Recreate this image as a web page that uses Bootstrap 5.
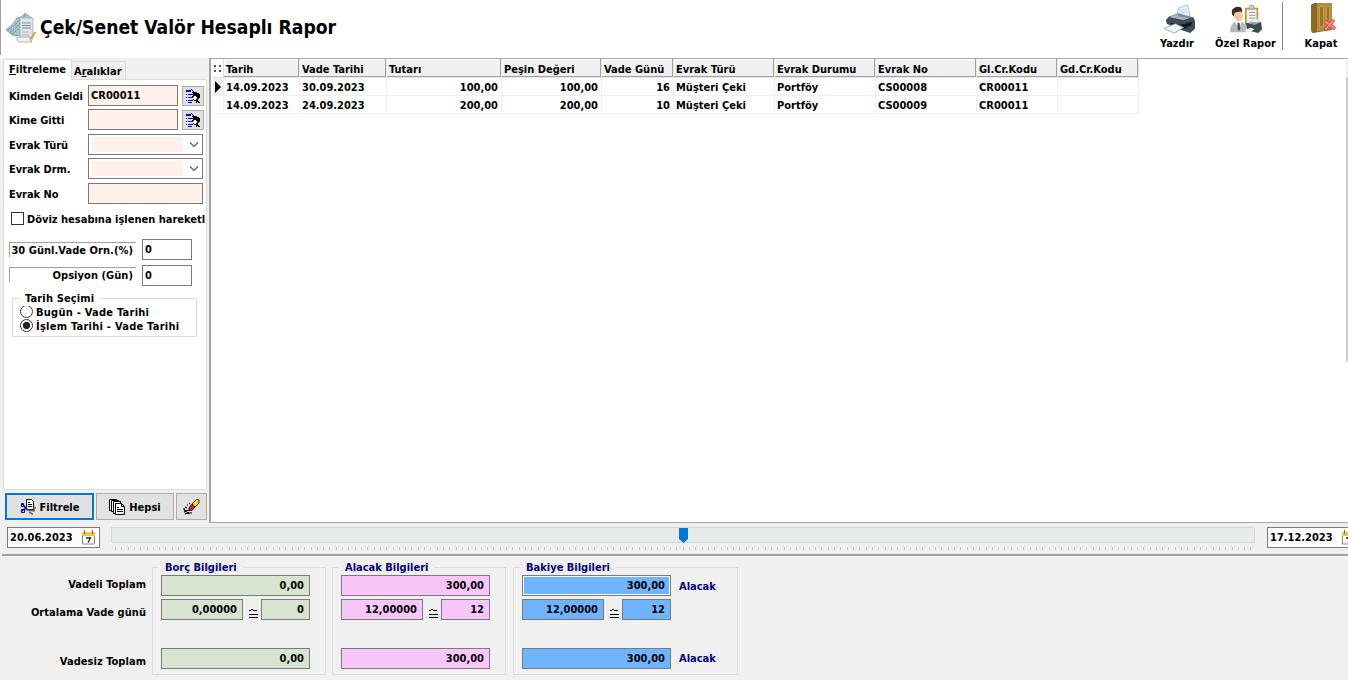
<!DOCTYPE html>
<html lang="tr">
<head>
<meta charset="utf-8">
<meta name="viewport" content="width=device-width, initial-scale=1">
<title>Çek/Senet Valör Hesaplı Rapor</title>
<link href="https://cdn.jsdelivr.net/npm/bootstrap@5.3.0/dist/css/bootstrap.min.css" rel="stylesheet">
<style>
body{width:1348px;height:680px;background:#f0f0f0;color:#000;font:bold 11px/14px "DejaVu Sans Condensed","DejaVu Sans",sans-serif;font-stretch:condensed;white-space:nowrap}
svg{display:block;flex:none}
.topbar{height:58px;background:linear-gradient(#a0a0a0,#a0a0a0) 0 0/1px 55px no-repeat #fff}
.topbar h1{font-size:19.150px;line-height:24px;font-weight:bold;margin:1px 0 0 4px}
.tool{padding-top:3px}
.tool svg{margin-bottom:2px}
.sep{width:1px;height:48px;background:#888;margin-top:2px}
.workarea{height:465px}
.side{width:211px;border-right:2px solid #a5a5aa;padding:1px 0 0 3px}
.tabs{height:20px}
.tab1{width:69px;height:21px;background:#fff;border:1px solid #dcdcdc;border-bottom:0;padding:3px 0 0 5px;z-index:1}
.tab2{width:54px;height:18px;border:1px solid #dcdcdc;border-left:0;border-bottom:0;margin-top:2px;padding:3px 0 0 2px}
.page{width:204px;height:411px;background:#fff;border:1px solid #dcdcdc;padding:5px 0 0 5px}
.frow{height:21px}
.flabel{width:79px;padding-top:5px;letter-spacing:-.05px}
.fld{height:21px;border:1px solid #7a7a7a;background:#fff;padding:3px 2px 2px}
.fld.peach{background:#fff0ea}
.combo{width:115px;padding:2px 3px 2px 2px}
.combo i{display:block;width:92px;height:15px;background:#fff0ea}
.mini{width:22px;height:20px;background:#e1e1e1;border:1px solid #adadad;margin:1px 0 0 4px;padding:1px 2px}
.chk{width:13px;height:13px;border:1px solid #333;margin:0 3px 0 2px;flex:none}
.bevel{width:127px;height:15px;border-top:1px solid #a0a0a0;border-left:1px solid #a0a0a0;text-align:right;padding-right:3px;line-height:15px;letter-spacing:.05px}
.gbox{border:1px solid #dcdcdc;position:relative}
.gbox>.cap{position:absolute;top:-8px;line-height:15px;padding:0 6px}
.radio{width:13px;height:13px;border:1px solid #333;border-radius:50%;background:#fff;margin-right:3px;flex:none}
.radio.on{background:radial-gradient(circle,#222 0 3.2px,#fff 4px)}
.opts{letter-spacing:.25px;height:14px;line-height:15px}
.btns{height:32px;padding:3px 0 0 2px;gap:2px}
.wbtn{height:27px;background:#e1e1e1;border:1px solid #adadad}
.wbtn.def{border:2px solid #0078d7}
.wbtn span{padding-top:2px;margin-left:1px}
.gridarea{background:#fff;border-top:1px solid #a5a5aa;border-bottom:1px solid #a5a5aa;padding:0 0 0 2px}
.dgrid{table-layout:fixed;width:926px;border-collapse:separate;border-spacing:0}
.dgrid th,.dgrid td{height:18px;padding:1px 3px 0 2px;line-height:15px;border-right:1px solid #f0f0f0;border-bottom:1px solid #f0f0f0;overflow:hidden}
.dgrid th{height:19px;background:#f0f0f0;border-color:#e8e8e8;box-shadow:inset -1px -1px #a0a0a0,inset 1px 1px #fff;padding-top:2px}
.dgrid th:first-child{background:#fff;border-color:#e0e0e0;box-shadow:none;padding:0 0 0 1px}
.dgrid td:first-child{padding:0 0 0 1px}
.sbar{width:2px;background:#cdcdcd;border-top:19px solid #f0f0f0;margin-bottom:160px}
.slide{height:33px;border-bottom:2px solid #a0a0a0;margin-left:2px;padding:4px 0 0 5px;overflow:hidden}
.date{width:93px;flex:none;padding:2px 3px 2px 2px}
.track{width:1144px;height:16px;background:#e7eaea;border:1px solid #d6d6d6}
.thumb{position:absolute;left:568px;top:1px}
.totals{height:124px;border-top:1px solid #fff;margin-left:2px;padding-top:10px}
.rowlabels{width:144px;text-align:right;letter-spacing:.04px}
.navy{color:#000080}
.sum{width:174px;height:108px;padding:7px 0 0 8px}
.sum .fld{text-align:right;padding-right:5px}
.sum .w1{width:149px}.sum .w2{width:82px}.sum .w3{width:49px}
.eq{margin-left:2px}
.green .fld{background:#d6e4d0}.pink .fld{background:#f9c6f9}.blue .fld{background:#6eb4ff}
.blue .fld.focus{box-shadow:inset 0 0 0 1px #fff}
</style>
</head>
<body class="overflow-hidden">
<svg width="0" height="0" class="position-absolute">
 <defs>
  <g id="pick" shape-rendering="crispEdges"><path fill="#00f" d="M1 2h5v2H1zM1 6h1v1H1zM3 6h5v1H3zM1 9h1v1H1zM3 9h4v1H3zM1 12h1v1H1zM3 12h5v1H3zM3 14h4v1H3z"/><path fill="#000" d="M6 1h1v1h1v1h1v1h3v1h2v1h1v4h-1v1h-1v2h1v1h1v1h-2v-1h-1v1h-1v-2h-2v-1H8v-2H7V8h1V5H7V4h1V3H7V2H6z"/><path fill="#fff" d="M9 8h2v1h1v2h-1v1H9v-1H8V9h1z"/></g>
  <g id="cal"><path fill="#fff" stroke="#888" d="M1.500 4.500h12v9.500h-12z"/><path fill="#f5c63c" d="M1 2h13v4H1z"/><path stroke="#666" d="M3.500 0v4M11.500 0v4"/><path d="M5 8h4.500L7 12.500" stroke="#222" stroke-width="1.300" fill="none"/></g>
  <path id="chev" d="M1 1.500l4 4 4-4" fill="none" stroke="#555" stroke-width="1.100"/>
  <path id="cong" d="M1 11.500h2M3 10.500h2M4.500 11.500h3M8.500 11v1M1 15.500h9M1 18.500h9" stroke="#000" fill="none" shape-rendering="crispEdges"/>
 </defs>
</svg>

<header class="topbar d-flex justify-content-between">
 <div class="d-flex align-items-center" style="height:55px;padding-left:5px">
  <svg width="31" height="32" viewBox="0 0 31 32"><path fill="#a9c6cc" stroke="#6f989f" stroke-width=".8" d="M1 18Q8 13 12 6q5 0 8-5l8 6-12 16-7 1z"/><path stroke="#55858c" fill="none" d="M3 18q8-5 11-10 4-1 6-5M5 20q6-3 10-9M7 22q5-3 8-7" stroke-dasharray="2 1"/><path fill="#dfe3e6" stroke="#a8afb5" stroke-width=".8" d="M15 6h13v20l-2 3H14l1-4z"/><path stroke="#8a9199" stroke-width="1.200" d="M17 11h9M17 13.500h9M17 16h9"/><path stroke="#b4bac0" d="M17 20h7M17 23h7"/><path fill="#f2f3f3" stroke="#a5a5a5" stroke-width=".8" d="M12 25h13q-1 3 2 5H14q-3-1-2-5z"/><path stroke="#e39b21" stroke-width="1.600" d="M30.500 20l-5 7"/></svg>
  <h1>Çek/Senet Valör Hesaplı Rapor</h1>
 </div>
 <div class="d-flex" style="margin-right:-11px">
  <div class="tool d-flex flex-column align-items-center" style="width:76px"><svg width="32" height="32" viewBox="0 0 34 32" style="margin-left:3px"><path fill="#e7f3fa" stroke="#9eb4c2" stroke-width=".8" d="M14 13L17 4 26 1l3 12z"/><path stroke="#b9d1de" d="M18 7l7-2M18 10l8-2"/><path fill="#7d8a95" d="M5 14l11-4 15 4 2 5-14 3z"/><path fill="#3d4c58" d="M3 17l4-4 14 4 11-3 2 4v8l-5 5-12-4-13-6z"/><path fill="#a9b6bf" d="M6 14l10-3v2l12 2-6 2z"/><path fill="#15191c" d="M8 20l11 2 12-3-1 4-9 4-10-3z"/><path fill="#eef7fb" stroke="#8499a6" stroke-width=".8" d="M1 26l12-5 9 4-10 6z"/></svg><span>Yazdır</span></div>
  <div class="tool d-flex flex-column align-items-center" style="width:61px"><svg width="32" height="32" viewBox="0 0 34 32"><path fill="#e9a52e" stroke="#b98732" d="M16.500 4.500h13v17h-13z"/><path fill="#f7fafb" d="M18 6h10v14H18z"/><path fill="#c8cdd0" stroke="#888" stroke-width=".7" d="M21 1.500h4l1 4h-6z"/><path stroke="#8799aa" d="M20 9h7M20 12h7M20 15h7"/><path fill="#f8c59c" d="M4 7l8-1 2 7-2 5H7l-3-5z"/><path fill="#3a2b25" d="M2 11V7q2-4 7-4 4 0 4 5l-1 1V8L5 9l-1 4z"/><path fill="#b5b9bd" d="M0 30q0-9 6-11l5-1 6 4v8z"/><path fill="#fff" d="M5 18l5 10 2-10z"/><path fill="#444" d="M8 20h2l1 6-1.500 3L8 26z"/><path fill="#e4f0f6" stroke="#9eb4c2" stroke-width=".6" d="M21 19l4-4 5 1v5z"/><path fill="#3b4852" d="M17 20l9 2 7-3 1 8-4 4-12-3z"/><path fill="#93a2ad" d="M19 20l6-1 6 1-5 2z"/><path fill="#e8f0f4" d="M15 28l7-3 4 2-6 4z"/></svg><span>Özel Rapor</span></div>
  <div class="sep" style="margin-left:6px"></div>
  <div class="tool d-flex flex-column align-items-center" style="width:76px"><svg width="31" height="32" viewBox="0 0 31 32" style="margin-left:1px"><path fill="#8b6a24" d="M5 2l3-2h18v27l-20 3-1-3z"/><path fill="#b58d3c" d="M9 0h17v26L9 29z"/><path fill="#8d6722" d="M8 0h3v29l-3 1z"/><path fill="#9a7229" stroke="#c39e4c" d="M13.500 3.500h4v20h-4zM20.500 3.500h3v18h-3z"/><path stroke="#d94752" stroke-width="3.500" stroke-linecap="round" d="M20 19l8 6M27 18l-7 8"/><path stroke="#ff8d95" stroke-width="1.800" stroke-linecap="round" d="M20 19l8 6M27 18l-7 8"/></svg><span>Kapat</span></div>
 </div>
</header>

<main class="workarea d-flex">
 <aside class="side flex-shrink-0">
  <div class="tabs d-flex"><div class="tab1 position-relative"><u>F</u>iltreleme</div><div class="tab2">A<u>r</u>alıklar</div></div>
  <div class="page">
   <div class="frow d-flex"><div class="flabel">Kimden Geldi</div><div class="fld peach" style="width:90px">CR00011</div><div class="mini"><svg width="16" height="16" viewBox="0 0 16 16"><use href="#pick"/></svg></div></div>
   <div class="frow d-flex" style="margin-top:3px"><div class="flabel">Kime Gitti</div><div class="fld peach" style="width:90px"></div><div class="mini"><svg width="16" height="16" viewBox="0 0 16 16"><use href="#pick"/></svg></div></div>
   <div class="frow d-flex" style="margin-top:4px"><div class="flabel">Evrak Türü</div><div class="fld combo d-flex justify-content-between align-items-center"><i></i><svg width="10" height="7"><use href="#chev"/></svg></div></div>
   <div class="frow d-flex" style="margin-top:3px"><div class="flabel">Evrak Drm.</div><div class="fld combo d-flex justify-content-between align-items-center"><i></i><svg width="10" height="7"><use href="#chev"/></svg></div></div>
   <div class="frow d-flex" style="margin-top:4px"><div class="flabel">Evrak No</div><div class="fld peach" style="width:115px"></div></div>
   <div class="d-flex overflow-hidden" style="margin:8px 1px 0 0;height:15px;line-height:15px"><div class="chk"></div><span>Döviz hesabına işlenen hareketl</span></div>
   <div class="frow d-flex" style="margin-top:12px"><div class="bevel" style="margin:3px 6px 0 0">30 Günl.Vade Orn.(%)</div><div class="fld" style="width:50px">0</div></div>
   <div class="frow d-flex" style="margin-top:5px"><div class="bevel" style="margin:2px 6px 0 0">Opsiyon (Gün)</div><div class="fld" style="width:50px">0</div></div>
   <div class="gbox" style="margin:12px 0 0 3px;width:185px;height:39px;padding:6px 0 0 7px">
    <div class="cap bg-white" style="left:6px;letter-spacing:.15px">Tarih Seçimi</div>
    <div class="opts d-flex"><div class="radio"></div>Bugün - Vade Tarihi</div>
    <div class="opts d-flex"><div class="radio on"></div>İşlem Tarihi - Vade Tarihi</div>
   </div>
  </div>
  <div class="btns d-flex">
   <div class="wbtn def d-flex align-items-center justify-content-center" style="width:89px"><svg style="margin-right:3px" width="16" height="16" viewBox="0 0 16 16"><path fill="#fff" stroke="#000" d="M6.500.5h5l2 2v8h-7z"/><path d="M8 3.500h2M8 5.500h4M8 7.500h4" stroke="#000"/><path d="M1 5.500h2l3 4 2 2M1 12.500l6-4" stroke="#0000c8" stroke-width="1.500" fill="none"/><path fill="none" stroke="#0000c8" d="M1.500 4.500h2v3h-2zM1.500 10.500h3v3h-3z"/><path d="M7 11l7 1v-3h2M9 13l4 2.500" stroke="#666" stroke-width="1.500" fill="none"/></svg><span>Filtrele</span></div>
   <div class="wbtn d-flex align-items-center justify-content-center" style="width:78px"><svg style="margin-right:3px" width="16" height="16" viewBox="0 0 16 16" fill="#fff" stroke="#000"><path d="M.5.5h7v11h-7z"/><path d="M2.500 1.500h7v11h-7z"/><path d="M4.500 2.500h7v12h-7z"/><path d="M6.500 4.500h6l3 3v8h-9z"/><path d="M8 8.500h2M8 10.500h6M8 12.500h6M12.500 5v2.500H15" fill="none"/></svg><span>Hepsi</span></div>
   <div class="wbtn d-flex align-items-center justify-content-center" style="width:31px"><svg width="17" height="16" viewBox="0 0 17 16"><path fill="#ffeb00" stroke="#000" stroke-width=".8" d="M9 5l4.500-4.500 2.500.5v3l-4 4z"/><path fill="#e31b23" stroke="#000" stroke-width=".8" d="M6 9l3-4 3 3-3 3.500H6z"/><path d="M1 13l5-2M2 15l3-1.500 2 1M0 10h2M4 6h1M2 8l2 1M6 4l1 1M1 11l3 1M7 14h2" stroke="#000" stroke-width="1.200"/></svg></div>
  </div>
 </aside>
 <section class="gridarea flex-grow-1 d-flex justify-content-between align-items-stretch">
  <div>
  <table class="dgrid">
   <colgroup><col style="width:11px"><col style="width:76px"><col style="width:87px"><col style="width:115px"><col style="width:100px"><col style="width:72px"><col style="width:101px"><col style="width:101px"><col style="width:101px"><col style="width:81px"><col style="width:81px"></colgroup>
   <thead><tr><th><svg width="8" height="9"><path d="M0 1h2v2H0zM5 1h2v2H5zM0 6h2v2H0zM5 6h2v2H5z" fill="#555"/></svg></th><th>Tarih</th><th>Vade Tarihi</th><th>Tutarı</th><th>Peşin Değeri</th><th>Vade Günü</th><th>Evrak Türü</th><th>Evrak Durumu</th><th>Evrak No</th><th>Gl.Cr.Kodu</th><th>Gd.Cr.Kodu</th></tr></thead>
   <tbody>
    <tr><td style="background:#f0f0f0"><svg width="8" height="12"><path d="M1 0l6 6-6 6z"/></svg></td><td>14.09.2023</td><td>30.09.2023</td><td class="text-end">100,00</td><td class="text-end">100,00</td><td class="text-end">16</td><td>Müşteri Çeki</td><td>Portföy</td><td>CS00008</td><td>CR00011</td><td></td></tr>
    <tr><td></td><td>14.09.2023</td><td>24.09.2023</td><td class="text-end">200,00</td><td class="text-end">200,00</td><td class="text-end">10</td><td>Müşteri Çeki</td><td>Portföy</td><td>CS00009</td><td>CR00011</td><td></td></tr>
   </tbody>
  </table>
  </div>
  <div class="sbar"></div>
 </section>
</main>

<section class="slide d-flex">
 <div class="fld date d-flex justify-content-between align-items-center"><span>20.06.2023</span><svg width="15" height="15"><use href="#cal"/></svg></div>
 <div class="position-relative flex-shrink-0" style="margin:0 12px 0 11px">
  <div class="track"></div>
  <svg class="thumb" width="9" height="15"><path fill="#0078d7" d="M0 0h9v11l-4.500 4L0 11z"/></svg>
  <svg id="ticks" width="1144" height="8" shape-rendering="crispEdges" fill="#c4c4c4"></svg>
 </div>
 <div class="fld date d-flex justify-content-between align-items-center"><span>17.12.2023</span><svg width="15" height="15"><use href="#cal"/></svg></div>
</section>

<footer class="totals d-flex align-items-start">
 <div class="rowlabels" style="margin-right:6px"><div style="margin-top:11px">Vadeli Toplam</div><div style="margin-top:14px">Ortalama Vade günü</div><div style="margin-top:35px">Vadesiz Toplam</div></div>
 <div class="gbox sum green"><div class="cap navy" style="left:6px;background:#f0f0f0">Borç Bilgileri</div>
  <div class="fld w1">0,00</div>
  <div class="d-flex justify-content-between w1" style="margin-top:3px"><div class="fld w2">0,00000</div><svg class="eq" width="11" height="21"><use href="#cong"/></svg><div class="fld w3">0</div></div>
  <div class="fld w1" style="margin-top:28px">0,00</div></div>
 <div class="gbox sum pink" style="margin-left:6px"><div class="cap navy" style="left:6px;background:#f0f0f0">Alacak Bilgileri</div>
  <div class="fld w1">300,00</div>
  <div class="d-flex justify-content-between w1" style="margin-top:3px"><div class="fld w2">12,00000</div><svg class="eq" width="11" height="21"><use href="#cong"/></svg><div class="fld w3">12</div></div>
  <div class="fld w1" style="margin-top:28px">300,00</div></div>
 <div class="gbox sum blue d-flex" style="margin-left:7px;width:225px"><div class="cap navy" style="left:6px;background:#f0f0f0">Bakiye Bilgileri</div>
  <div><div class="fld w1 focus">300,00</div>
  <div class="d-flex justify-content-between w1" style="margin-top:3px"><div class="fld w2">12,00000</div><svg class="eq" width="11" height="21"><use href="#cong"/></svg><div class="fld w3">12</div></div>
  <div class="fld w1" style="margin-top:28px">300,00</div></div>
  <div class="navy ms-2"><div style="margin-top:5px">Alacak</div><div style="margin-top:58px">Alacak</div></div></div>
</footer>
<script src="https://cdn.jsdelivr.net/npm/bootstrap@5.3.0/dist/js/bootstrap.bundle.min.js"></script>
<script>
// One tick per day between the two dates
let marks = '';
for (let d = 0; d <= 180; d++) marks += `<rect x="${Math.round(4 + d * 6.308)}" y="4" width="1" height="3"/>`;
document.getElementById('ticks').innerHTML = marks;
</script>
</body>
</html>
